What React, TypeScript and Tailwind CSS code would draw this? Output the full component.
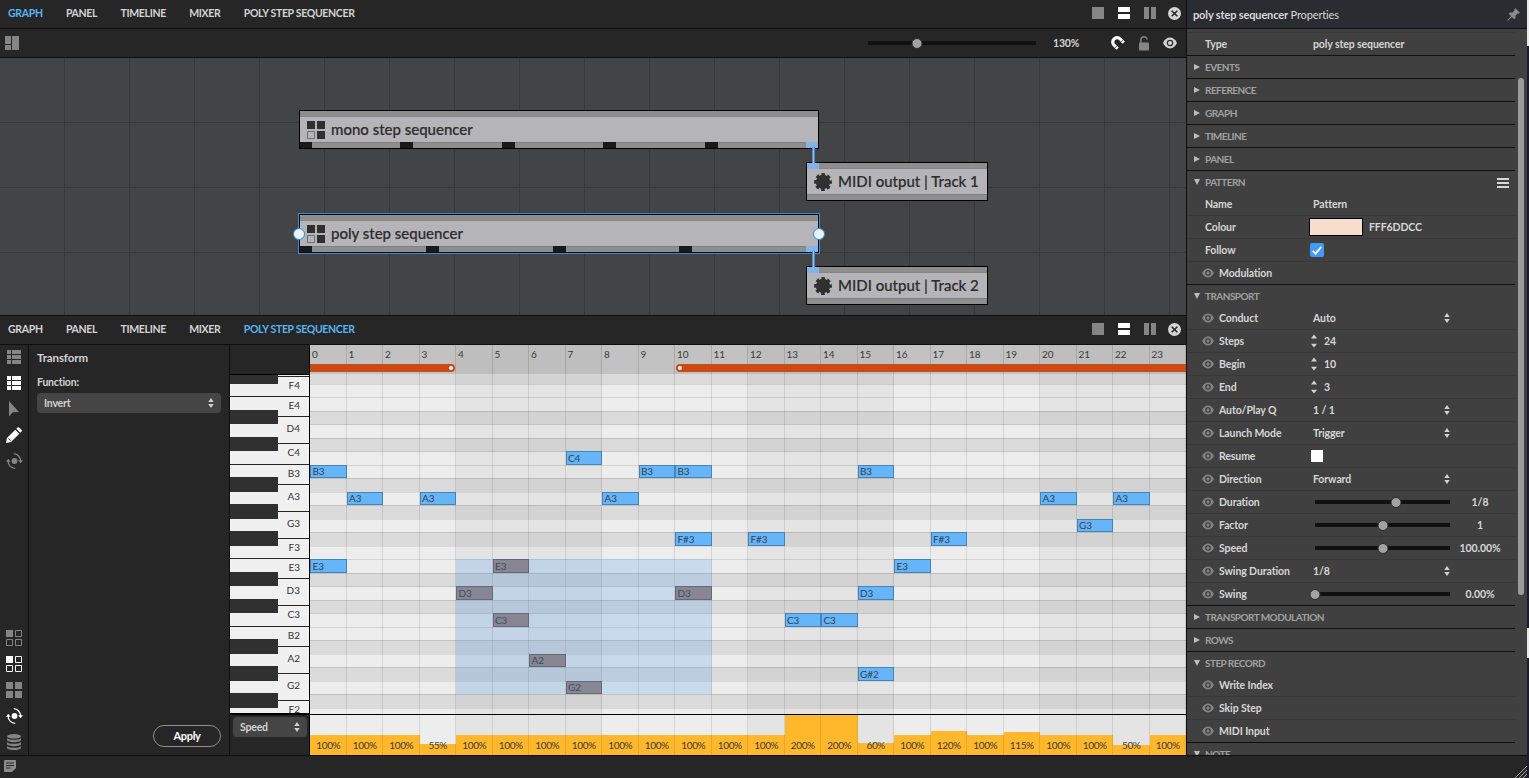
import type { ReactNode } from "react";
import clsx from "clsx";

const TABS = ["GRAPH", "PANEL", "TIMELINE", "MIXER", "POLY STEP SEQUENCER"];

const STEPS = Array.from({ length: 24 }, (_, i) => i);

const ROWS = [
  "F#4", "F4", "E4", "D#4", "D4", "C#4", "C4",
  "B3", "A#3", "A3", "G#3", "G3", "F#3", "F3", "E3", "D#3", "D3", "C#3", "C3",
  "B2", "A#2", "A2", "G#2", "G2", "F#2", "F2",
];

type Note = { step: number; pitch: string; selected?: boolean };

const NOTES: Note[] = [
  { step: 0, pitch: "B3" },
  { step: 0, pitch: "E3" },
  { step: 1, pitch: "A3" },
  { step: 3, pitch: "A3" },
  { step: 4, pitch: "D3", selected: true },
  { step: 5, pitch: "E3", selected: true },
  { step: 5, pitch: "C3", selected: true },
  { step: 6, pitch: "A2", selected: true },
  { step: 7, pitch: "C4" },
  { step: 7, pitch: "G2", selected: true },
  { step: 8, pitch: "A3" },
  { step: 9, pitch: "B3" },
  { step: 10, pitch: "B3" },
  { step: 10, pitch: "F#3" },
  { step: 10, pitch: "D3", selected: true },
  { step: 12, pitch: "F#3" },
  { step: 13, pitch: "C3" },
  { step: 14, pitch: "C3" },
  { step: 15, pitch: "B3" },
  { step: 15, pitch: "D3" },
  { step: 15, pitch: "G#2" },
  { step: 16, pitch: "E3" },
  { step: 17, pitch: "F#3" },
  { step: 20, pitch: "A3" },
  { step: 21, pitch: "G3" },
  { step: 22, pitch: "A3" },
];

const SPEEDS = [
  100, 100, 100, 55, 100, 100, 100, 100, 100, 100, 100, 100, 100, 200, 200, 60, 100, 120, 100, 115,
  100, 100, 50, 100,
];

// white key heights, separator line included
const WHITE_KEYS = [
  { name: "F4", h: 20 },
  { name: "E4", h: 20 },
  { name: "D4", h: 27 },
  { name: "C4", h: 21 },
  { name: "B3", h: 20 },
  { name: "A3", h: 27 },
  { name: "G3", h: 27 },
  { name: "F3", h: 20 },
  { name: "E3", h: 20 },
  { name: "D3", h: 27 },
  { name: "C3", h: 21 },
  { name: "B2", h: 20 },
  { name: "A2", h: 27 },
  { name: "G2", h: 27 },
  { name: "F2", h: 20 },
];

const BLACK_KEYS = [
  { gap: 0, h: 9 },
  { gap: 26, h: 14 },
  { gap: 13, h: 14 },
  { gap: 26, h: 15 },
  { gap: 12, h: 15 },
  { gap: 12, h: 15 },
  { gap: 26, h: 14 },
  { gap: 13, h: 14 },
  { gap: 26, h: 15 },
  { gap: 12, h: 15 },
  { gap: 12, h: 15 },
];

const isShaded = (step: number) => Math.floor(step / 4) % 2 === 1;

/* ---------- icons ---------- */

const EyeIcon = ({ className }: { className?: string }) => (
  <svg viewBox="0 0 14 12" className={className}>
    <path d="M0 6C1.6 2.5 4 .6 7 .6s5.400 1.900 7 5.400c-1.600 3.500-4 5.400-7 5.400S1.600 9.500 0 6Z" fill="currentColor" />
    <circle cx="7" cy="6" r="2.700" fill="none" stroke="#333" strokeWidth="1.300" />
  </svg>
);

const UpDown = ({ wide }: { wide?: boolean }) =>
  wide ? (
    <svg width="6" height="14" viewBox="0 0 6 14" className="text-[#d2d2d2]">
      <path d="M3 0.500 6 4.500H0ZM3 13.500 6 9.800H0Z" fill="currentColor" />
    </svg>
  ) : (
    <svg width="6" height="10" viewBox="0 0 6 10" className="text-[#d2d2d2]">
      <path d="M3 0 5.700 4H0.300ZM3 10 5.700 6H0.300Z" fill="currentColor" />
    </svg>
  );

const ListIcon = () => (
  <svg width="14" height="14" viewBox="0 0 14 14" fill="currentColor">
    <path d="M0 0h4v4H0zM5 0h9v4H5zM0 5h4v4H0zM5 5h9v4H5zM0 10h4v4H0zM5 10h9v4H5z" />
  </svg>
);

const CursorIcon = () => (
  <svg width="16" height="16" viewBox="0 0 16 16" fill="currentColor">
    <path d="M3 0v15.500l3.700-4.300 6.300-.2Z" />
  </svg>
);

const PencilIcon = () => (
  <svg width="16" height="16" viewBox="0 0 16 16" fill="currentColor">
    <path d="M0 16l.9-5L9.300 2.700l4 4L5 15.100ZM10.300 1.700 11.600.5q.8-.7 1.600 0l2.300 2.300q.8.800 0 1.600l-1.200 1.300Z" />
    <path d="M2.300 11.500l2.200 2.200" stroke="#262626" strokeWidth="1" />
  </svg>
);

const OrbitIcon = () => (
  <svg width="17" height="16" viewBox="0 0 17 16" fill="none" stroke="currentColor" strokeWidth="1.300">
    <circle cx="8.500" cy="8" r="2.900" fill="currentColor" stroke="none" />
    <path d="M7.800.7a7.200 7.200 0 0 1 6.700 7.300M9.200 15.300A7.200 7.200 0 0 1 2.100 8" />
    <path d="M12.100 7.300h4.900l-2.500 3ZM0 8.700h4.600L2.200 5.700Z" fill="currentColor" stroke="none" />
  </svg>
);

const QuadIcon = ({ filled }: { filled: boolean }) => (
  <svg width="16" height="16" viewBox="0 0 16 16" fill="currentColor">
    <path d="M0 0h7v7H0z" />
    {filled ? (
      <path d="M9 0h7v7H9zM0 9h7v7H0zM9 9h7v7H9z" />
    ) : (
      <path d="M9.500.5h6v6h-6zM.5 9.500h6v6h-6zM9.500 9.500h6v6h-6z" fill="none" stroke="currentColor" />
    )}
  </svg>
);

const StackIcon = () => (
  <svg width="14" height="16" viewBox="0 0 14 16" fill="currentColor">
    <ellipse cx="7" cy="2.300" rx="7" ry="2.300" />
    <path d="M0 4.200c2.500 2.200 11.500 2.200 14 0v1.800c0 2.900-14 2.900-14 0zM0 8.200c2.500 2.200 11.500 2.200 14 0V10c0 2.900-14 2.900-14 0zM0 12.200c2.500 2.200 11.500 2.200 14 0v1.500c0 3.100-14 3.100-14 0z" />
  </svg>
);

const SequencerIcon = () => (
  <svg width="18" height="18" viewBox="0 0 18 18" fill="#303030" className="shrink-0">
    <path d="M0 0h8v8H0zM10 0h8v8h-8zM10 10h8v8h-8z" />
    <path d="M.5 10.500h7v7h-7z" fill="none" stroke="#6e6e70" />
  </svg>
);

const OutputIcon = () => (
  <svg width="18" height="18" viewBox="0 0 18 18" fill="#303030" className="shrink-0">
    <circle cx="9" cy="9" r="7.200" />
    <circle cx="9" cy="9" r="7.600" fill="none" stroke="#303030" strokeWidth="2.600" strokeDasharray="3.600 2.368" strokeDashoffset="1.800" />
  </svg>
);

const MagnetIcon = () => (
  <svg width="14" height="14" viewBox="0 0 14 14" fill="none" stroke="#fff">
    <path d="M6.600 12.700 3 9.200A4.300 4.300 0 0 1 3 3 4.300 4.300 0 0 1 9.200 3L12.700 6.600" strokeWidth="3.200" />
    <path d="M3.700 12.200 6.500 9.400M9.400 6.500l2.800-2.800" stroke="#262626" strokeWidth=".7" />
  </svg>
);

const LockIcon = () => (
  <svg width="10" height="15" viewBox="0 0 10 15" fill="none" stroke="#858585">
    <path d="M1.900 7V4a3.100 3.100 0 0 1 6.200-.4" strokeWidth="1.400" />
    <rect x="0" y="6.500" width="10" height="8" rx=".8" fill="#858585" stroke="none" />
  </svg>
);

const PinIcon = () => (
  <svg width="13" height="13" viewBox="0 0 13 13" fill="#8c8c8c">
    <path d="M8.400.2 12.800 4.600 11.700 5.700 10.700 5.400 8.500 7.600 8.600 10 7.300 11.300 4.900 8.900 1 12.500.3 12.700.5 12 4.100 8.100 1.700 5.700 3 4.400 5.400 4.500 7.600 2.300 7.300 1.300Z" />
  </svg>
);

/* ---------- shared bits ---------- */

const TabBar = ({ active }: { active: string }) => (
  <div className="flex h-7 shrink-0 items-center justify-between bg-[#262626] pb-0.5 pl-2 pr-1">
    <nav className="flex gap-[23.25px] pt-0.5 text-[10.5px] font-bold tracking-[-0.32px]">
      {TABS.map((tab) => (
        <span key={tab} className={tab === active ? "text-[#57b4f0]" : "text-[#d3d3d3]"}>
          {tab}
        </span>
      ))}
    </nav>
    <div className="flex items-center gap-3.5">
      <div className="size-3 bg-[#858585]" />
      <div className="flex h-3 w-3 flex-col gap-0.5">
        <div className="h-[5px] bg-white" />
        <div className="h-[5px] bg-white" />
      </div>
      <div className="flex h-3 w-3 gap-0.5">
        <div className="w-[5px] bg-[#858585]" />
        <div className="w-[5px] bg-[#858585]" />
      </div>
      <svg width="13" height="13" viewBox="0 0 13 13" className="-ml-[1.600px] mr-[0.600px]">
        <circle cx="6.500" cy="6.500" r="6.500" fill="#d4d4d4" />
        <path d="m3.700 3.700 5.600 5.600m0-5.600-5.600 5.600" stroke="#262626" strokeWidth="1.600" />
      </svg>
    </div>
  </div>
);

const Slider = ({ width, pos }: { width: number; pos: number }) => (
  <div className="relative h-1 shrink-0 bg-[#111]" style={{ width }}>
    <div
      className="absolute -top-[3.500px] size-[11px] -translate-x-1/2 rounded-full border border-[#2a2a2a] bg-[#a3a3a3]"
      style={{ left: pos }}
    />
  </div>
);

/* ---------- graph ---------- */

type NodeProps = {
  className: string;
  label: string;
  icon: ReactNode;
  ports?: number;
  input?: boolean;
  selected?: boolean;
};

const GraphNode = ({ className, label, icon, ports = 0, input, selected }: NodeProps) => (
  <div className={clsx("absolute flex h-[39px] flex-col border border-black", className)}>
    <div className="h-1.5 border-b border-[#868686] bg-[#8e8e8e]">
      {input && <div className="h-1.5 w-3 bg-[#82b4ea]" />}
    </div>
    <div className="flex h-[25px] items-center gap-1.5 bg-[#b5b4b9] pl-[7px] text-[15px] font-medium text-[#2d2d2d] [-webkit-text-stroke:0.2px_#2d2d2d]">
      {icon}
      <span className="whitespace-nowrap">{label}</span>
    </div>
    <div className="flex h-1.5 justify-between border-t border-[#7e7e7e] bg-[#8e8e8e]">
      {Array.from({ length: ports }, (_, i) => (
        <div
          key={i}
          className={clsx(
            "-mt-px h-1.5",
            i === 0 || i === ports - 1 ? "w-3" : "w-[13px]",
            i === ports - 1 ? "bg-[#82b4ea]" : "bg-[#191919]",
          )}
        />
      ))}
    </div>
    {selected && (
      <>
        <div className="absolute -inset-0.5 border border-[#1e93ea]" />
        <div className="absolute -left-[7px] top-[13px] size-3 rounded-full border-[1.500px] border-[#1c8fe3] bg-[#f0f0f0]" />
        <div className="absolute -right-[7px] top-[13px] size-3 rounded-full border-[1.500px] border-[#1c8fe3] bg-[#f0f0f0]" />
      </>
    )}
  </div>
);

const Cable = ({ className }: { className: string }) => (
  <div className={clsx("absolute h-4 w-[3px] border-x border-[#5587bd] bg-[#8fc0f3]", className)} />
);

const GraphPanel = () => (
  <section className="flex h-[316px] shrink-0 flex-col border-b border-[#0f0f0f]">
    <TabBar active="GRAPH" />
    <div className="flex h-[30px] shrink-0 items-center justify-between border-y border-[#0f0f0f] bg-[#262626] pl-[5px] pr-[9px]">
      <svg width="14" height="14" viewBox="0 0 14 14" fill="#858585">
        <path d="M0 0h6v8H0zM0 9h6v5H0zM7 0h7v14H7z" />
      </svg>
      <div className="flex items-center">
        <Slider width={168} pos={48.5} />
        <span className="ml-[17px] w-[58px] pt-0.5 text-[10.5px] font-bold tracking-[-0.2px] text-[#d3d3d3]">130%</span>
        <MagnetIcon />
        <div className="ml-3.5 mr-3.5">
          <LockIcon />
        </div>
        <EyeIcon className="h-3 w-3.5 text-[#d2d2d2]" />
      </div>
    </div>
    <div className="relative flex-1 overflow-hidden bg-[#434445] bg-[linear-gradient(to_right,transparent_64px,#373839_64px),linear-gradient(to_bottom,transparent_64px,#373839_64px)] bg-[size:65px_65px]">
      <GraphNode className="left-[299px] top-[52px] w-[520px]" label="mono step sequencer" icon={<SequencerIcon />} ports={6} />
      <GraphNode
        className="left-[299px] top-[156px] w-[520px]"
        label="poly step sequencer"
        icon={<SequencerIcon />}
        ports={5}
        selected
      />
      <GraphNode className="left-[806px] top-[104px] w-[182px]" label="MIDI output | Track 1" icon={<OutputIcon />} input />
      <GraphNode className="left-[806px] top-[208px] w-[182px]" label="MIDI output | Track 2" icon={<OutputIcon />} input />
      <Cable className="left-[812px] top-[89px]" />
      <Cable className="left-[812px] top-[193px]" />
    </div>
  </section>
);

/* ---------- sequencer ---------- */

const ToolColumn = () => (
  <div className="flex w-[29px] shrink-0 flex-col justify-between border-r border-[#0f0f0f] text-[#858585]">
    <div className="-mt-px flex flex-col items-center">
      {[
        { icon: <ListIcon /> },
        { icon: <ListIcon />, on: true },
        { icon: <CursorIcon /> },
        { icon: <PencilIcon />, on: true },
        { icon: <OrbitIcon /> },
      ].map((t, i) => (
        <div key={i} className={clsx("flex h-[26px] items-center", t.on && "text-white")}>
          {t.icon}
        </div>
      ))}
    </div>
    <div className="flex flex-col items-center">
      {[
        { icon: <QuadIcon filled={false} /> },
        { icon: <QuadIcon filled={false} />, on: true },
        { icon: <QuadIcon filled /> },
        { icon: <OrbitIcon />, on: true },
        { icon: <StackIcon /> },
      ].map((t, i) => (
        <div key={i} className={clsx("flex h-[26px] items-center", t.on && "text-white")}>
          {t.icon}
        </div>
      ))}
    </div>
  </div>
);

const TransformPanel = () => (
  <div className="flex w-[201px] shrink-0 flex-col border-r border-[#0f0f0f] px-2 pb-2 pt-1.5 text-[#d3d3d3]">
    <h2 className="text-[11.500px] font-bold leading-[14px] tracking-[-0.1px]">Transform</h2>
    <span className="mt-[11px] text-[10.500px] font-bold leading-3 tracking-[-0.2px]">Function:</span>
    <div className="mt-[5px] flex h-5 items-center justify-between rounded-sm bg-[#454545] pl-[7px] pr-[7px] text-[10.500px] font-bold">
      <span className="pt-0.5 tracking-[-0.2px]">Invert</span>
      <UpDown />
    </div>
    <button className="mt-auto h-[22px] w-[68px] self-end rounded-full border border-[#8f8f8f] text-[11px] font-bold tracking-[-0.3px] text-white">
      Apply
    </button>
  </div>
);

const Piano = () => (
  <div className="relative h-[339px] overflow-hidden border-t border-black bg-[#f0f0f0]">
    <div className="flex flex-col">
      <div className="h-0.5 border-b border-[#262626]" />
      {WHITE_KEYS.map((k) => (
        <div
          key={k.name}
          className={clsx(
            "flex shrink-0 items-center justify-end border-b border-[#262626] pr-[9px] text-[10px] text-[#333]",
            k.h > 20 ? "pb-[3px]" : "pb-0.5",
          )}
          style={{ height: k.h }}
        >
          {k.name}
        </div>
      ))}
    </div>
    <div className="absolute left-0 top-0 w-12">
      {BLACK_KEYS.map((k, i) => (
        <div key={i} className="bg-[#303030]" style={{ height: k.h, marginTop: k.gap }} />
      ))}
    </div>
  </div>
);

const KeyColumn = () => (
  <div className="flex w-20 shrink-0 flex-col border-r border-black">
    <div className="h-[29px]" />
    <Piano />
    <div className="h-0.5 bg-black" />
    <div className="mx-[3px] mr-0.5 mt-0.5 flex h-5 items-center justify-between rounded-sm bg-[#454545] px-[7px] text-[10.500px] font-bold text-[#d3d3d3]">
      <span className="pt-0.5 tracking-[-0.2px]">Speed</span>
      <UpDown />
    </div>
  </div>
);

const Ruler = () => (
  <div className="relative grid h-[29px] shrink-0 grid-cols-24 bg-[#c2c2c2]">
    {STEPS.map((s) => (
      <div
        key={s}
        className={clsx(
          "border-r border-black/12 pl-0.5 pt-[3px] text-[10px] leading-3 tracking-[-0.15px] text-[#3a3a3a]",
          isShaded(s) && "bg-black/[0.02]",
        )}
      >
        {s}
      </div>
    ))}
    <div className="absolute left-0 top-[19px] flex h-2 w-[145px] items-center justify-end rounded-r-full bg-[#cb4b16] pr-0.5">
      <div className="size-1 rounded-full bg-white" />
    </div>
    <div className="absolute left-[366px] right-0 top-[19px] flex h-2 items-center rounded-l-full bg-[#cb4b16] pl-0.5">
      <div className="size-1 rounded-full bg-white" />
    </div>
  </div>
);

const StepGrid = () => (
  <div className="grid h-[340px] shrink-0 grid-cols-24 grid-rows-[9.500px_repeat(24,13.500px)_6.500px] overflow-hidden">
    {ROWS.map((pitch, i) => (
      <div
        key={pitch}
        className={clsx(
          "col-span-full border-t",
          pitch.includes("#") ? "bg-[#dbdbdb] border-[#c1c1c1]" : "bg-[#ededed] border-[#d3d3d3]",
          /^[DC]\d$/.test(pitch) && "border-[#c8c8c8]!",
          pitch !== "F4" && /^[AGF]\d$/.test(pitch) && "border-[#dbdbdb]!",
          i === 0 && "border-[#dbdbdb]!",
        )}
        style={{ gridRow: i + 1 }}
      />
    ))}
    {STEPS.map((s) => (
      <div
        key={s}
        className={clsx("row-span-full border-r border-black/10", isShaded(s) && "bg-black/[0.035]")}
        style={{ gridColumn: s + 1 }}
      />
    ))}
    <div
      className="bg-[#5aa4e8]/25"
      style={{
        gridColumn: "5 / 12",
        gridRow: `${ROWS.indexOf("E3") + 1} / ${ROWS.indexOf("F#2") + 1}`,
      }}
    />
    {NOTES.map((n) => (
      <div
        key={`${n.step}-${n.pitch}`}
        className={clsx(
          "flex items-center border pl-[1.500px] text-[10px] leading-none tracking-[-0.1px]",
          n.selected ? "border-[#656877] bg-[#888692] text-[#3d4f63]" : "border-[#4684b8] bg-[#65b5f8] text-[#35414d]",
        )}
        style={{ gridColumn: n.step + 1, gridRow: ROWS.indexOf(n.pitch) + 1 }}
      >
        {n.pitch}
      </div>
    ))}
  </div>
);

const ValueLane = () => (
  <div className="grid h-[41px] shrink-0 grid-cols-24 border-t border-black bg-[#ededed]">
    {SPEEDS.map((v, i) => (
      <div
        key={i}
        className={clsx("relative flex items-end border-r border-black/10", isShaded(i) && "bg-black/[0.035]")}
      >
        <div className="-mr-px flex-1 border-r border-[#e8a628] bg-[#ffb72b]" style={{ height: v / 5 }} />
        <span className="absolute inset-x-0 bottom-1 pl-px text-center text-[10px] leading-3 tracking-[-0.4px] text-[#3a3a3a]">
          {v}%
        </span>
      </div>
    ))}
  </div>
);

const SequencerPanel = () => (
  <section className="flex min-h-0 flex-1 flex-col">
    <TabBar active="POLY STEP SEQUENCER" />
    <div className="flex min-h-0 flex-1 border-t border-[#0f0f0f] bg-[#262626]">
      <ToolColumn />
      <TransformPanel />
      <KeyColumn />
      <div className="flex w-[876px] flex-col">
        <Ruler />
        <StepGrid />
        <ValueLane />
      </div>
    </div>
  </section>
);

/* ---------- properties ---------- */

const Section = ({ title, open, menu, children }: { title: string; open?: boolean; menu?: boolean; children?: ReactNode }) => (
  <div className="shrink-0 border-t border-[#0f0f0f]">
    <div className="flex h-[22px] items-center pl-[7px] pr-1.5 text-[10px] font-bold tracking-[-0.55px] text-[#a0a0a0]">
      <svg width="6" height="6" viewBox="0 0 6 6" className="mr-[5px]" fill="#bdbdbd">
        <path d={open ? "M0 0h6L3 6Z" : "M0 0v6l6-3Z"} />
      </svg>
      {title}
      {menu && (
        <div className="ml-auto flex w-3 flex-col gap-0.5 pt-0.5">
          <div className="h-0.5 bg-[#d8d8d8]" />
          <div className="h-0.5 bg-[#d8d8d8]" />
          <div className="h-0.5 bg-[#d8d8d8]" />
        </div>
      )}
    </div>
    <div className="divide-y divide-[#383838]">{children}</div>
  </div>
);

const Text = ({ className, children }: { className?: string; children: ReactNode }) => (
  <span className={clsx("whitespace-nowrap pt-0.5", className)}>{children}</span>
);

const Row = ({ label, eye, children }: { label: string; eye?: boolean; children?: ReactNode }) => (
  <div className="flex h-[22px] items-center text-[10.500px] font-bold tracking-[-0.1px] text-[#d6d6d6] not-last:h-[23px]">
    <div className={clsx("flex w-[126px] shrink-0 items-center", eye ? "pl-[15px]" : "pl-[18px]")}>
      {eye && <EyeIcon className="mr-[5px] h-2.5 w-3 text-[#858585]" />}
      <Text>{label}</Text>
    </div>
    {children}
  </div>
);

const SelectValue = ({ children }: { children: ReactNode }) => (
  <div className="flex w-[137px] items-center justify-between">
    <Text>{children}</Text>
    <UpDown />
  </div>
);

const StepperValue = ({ children }: { children: ReactNode }) => (
  <div className="-ml-0.5 flex items-center gap-[7px]">
    <UpDown wide />
    <Text>{children}</Text>
  </div>
);

const SliderValue = ({ pos, children }: { pos: number; children: ReactNode }) => (
  <div className="flex items-center pl-0.5">
    <Slider width={135} pos={pos} />
    <Text className="w-[60px] text-center">{children}</Text>
  </div>
);

const PropertiesPanel = () => (
  <aside className="flex w-[341px] shrink-0 flex-col border-l border-[#0f0f0f] bg-[#404040]">
    <header className="flex h-[29px] shrink-0 items-center justify-between border-b border-[#0f0f0f] bg-[#2b2c32] pl-1.5 pr-[7px] text-[11px] tracking-[-0.14px] text-[#d8d8d8]">
      <span className="pt-0.5">
        <b>poly step sequencer</b> Properties
      </span>
      <PinIcon />
    </header>
    <div className="relative min-h-0 flex-1 overflow-hidden pr-3 pt-[3px]">
      <div className="border-t border-[#393939]">
        <Row label="Type">
          <Text>poly step sequencer</Text>
        </Row>
      </div>
      <Section title="EVENTS" />
      <Section title="REFERENCE" />
      <Section title="GRAPH" />
      <Section title="TIMELINE" />
      <Section title="PANEL" />
      <Section title="PATTERN" open menu>
        <Row label="Name">
          <Text>Pattern</Text>
        </Row>
        <Row label="Colour">
          <div className="-ml-1 mr-1.5 h-[18px] w-[54px] border border-black bg-[#f6ddcc]" />
          <Text>FFF6DDCC</Text>
        </Row>
        <Row label="Follow">
          <div className="-ml-[3px] flex size-3.5 items-center justify-center rounded-xs bg-[#3f9bf7]">
            <svg width="10" height="9" viewBox="0 0 10 9" fill="none" stroke="#fff" strokeWidth="1.800">
              <path d="m.8 4.900 2.700 2.800L9.300.8" />
            </svg>
          </div>
        </Row>
        <Row label="Modulation" eye />
      </Section>
      <Section title="TRANSPORT" open>
        <Row label="Conduct" eye>
          <SelectValue>Auto</SelectValue>
        </Row>
        <Row label="Steps" eye>
          <StepperValue>24</StepperValue>
        </Row>
        <Row label="Begin" eye>
          <StepperValue>10</StepperValue>
        </Row>
        <Row label="End" eye>
          <StepperValue>3</StepperValue>
        </Row>
        <Row label="Auto/Play Q" eye>
          <SelectValue>1 / 1</SelectValue>
        </Row>
        <Row label="Launch Mode" eye>
          <SelectValue>Trigger</SelectValue>
        </Row>
        <Row label="Resume" eye>
          <div className="-ml-0.5 size-3 bg-white" />
        </Row>
        <Row label="Direction" eye>
          <SelectValue>Forward</SelectValue>
        </Row>
        <Row label="Duration" eye>
          <SliderValue pos={81}>1/8</SliderValue>
        </Row>
        <Row label="Factor" eye>
          <SliderValue pos={67.5}>1</SliderValue>
        </Row>
        <Row label="Speed" eye>
          <SliderValue pos={67.5}>100.00%</SliderValue>
        </Row>
        <Row label="Swing Duration" eye>
          <SelectValue>1/8</SelectValue>
        </Row>
        <Row label="Swing" eye>
          <SliderValue pos={0}>0.00%</SliderValue>
        </Row>
      </Section>
      <Section title="TRANSPORT MODULATION" />
      <Section title="ROWS" />
      <Section title="STEP RECORD" open>
        <Row label="Write Index" eye />
        <Row label="Skip Step" eye />
        <Row label="MIDI Input" eye />
      </Section>
      <Section title="NOTE" open />
      <div className="absolute right-[3px] top-[49px] h-[517px] w-1.5 rounded-full bg-[#9c9c9c]" />
    </div>
  </aside>
);

export default function App() {
  return (
    <div className="flex h-[778px] w-[1529px] overflow-hidden bg-[#1d1c26] font-['Lato',sans-serif]">
      <div className="flex w-[1527px] flex-col">
        <div className="flex h-[755px]">
          <main className="flex w-[1186px] shrink-0 flex-col">
            <GraphPanel />
            <SequencerPanel />
          </main>
          <PropertiesPanel />
        </div>
        <footer className="flex h-[23px] items-start justify-between border-t border-[#0f0f0f] bg-[#262626] pl-1 pt-1">
          <svg width="12" height="12" viewBox="0 0 12 12">
            <path d="M1 0h10q1 0 1 1v7l-4 4H1q-1 0-1-1V1q0-1 1-1Z" fill="#8c8c8c" />
            <path d="M2 3h8M2 5.500h8M2 8h4.500" stroke="#262626" />
          </svg>
          <svg width="13" height="13" viewBox="0 0 13 13" className="self-end" stroke="#a5a5a5">
            <path d="M1 13 13 1M5 13l8-8M9 13l4-4" />
          </svg>
        </footer>
      </div>
      <div className="flex w-0.5 flex-col">
        <div className="h-[46px] bg-[#e9e9e9]" />
        <div className="mt-[582px] h-[30px] bg-[#e9e9e9]" />
      </div>
    </div>
  );
}
